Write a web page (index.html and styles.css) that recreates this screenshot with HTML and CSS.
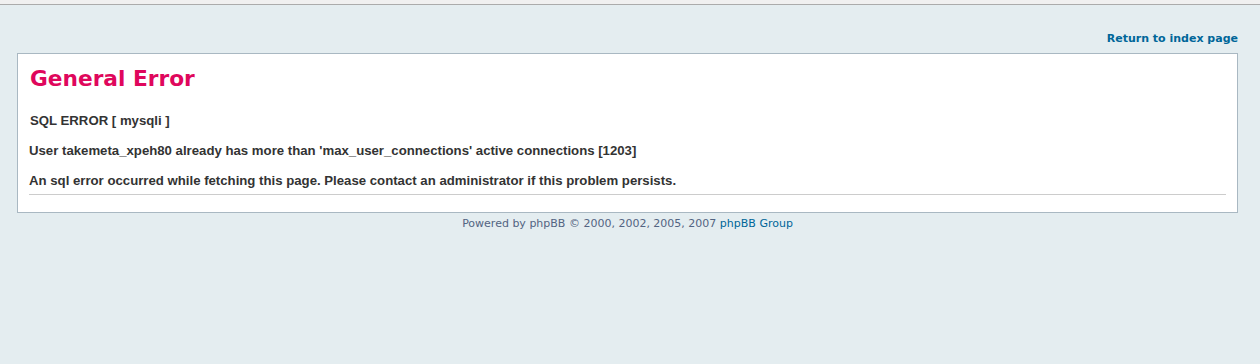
FILE: index.html
```
<!DOCTYPE html>
<html lang="en">
<head>
    <meta charset="UTF-8">
    <title>General Error</title>
    <link rel="stylesheet" href="styles.css">
</head>
<body id="errorpage">
<div class="topbar"></div>
<div id="wrap">
    <div id="page-header">
        <a href="#">Return to index page</a>
    </div>
    <div id="acp">
        <div class="panel">
            <div id="content">
                <h1>General Error</h1>
                <div class="message">
                    SQL ERROR [ mysqli ]<br><br>
                    User takemeta_xpeh80 already has more than 'max_user_connections' active connections [1203]<br><br>
                    An sql error occurred while fetching this page. Please contact an administrator if this problem persists.
                </div>
            </div>
        </div>
    </div>
    <div id="page-footer">
        Powered by phpBB &copy; 2000, 2002, 2005, 2007 <a href="#">phpBB Group</a>
    </div>
</div>
</body>
</html>
```

FILE: styles.css
```
* { margin: 0; padding: 0; }
body {
    font-family: "DejaVu Sans", Verdana, sans-serif;
    color: #536482;
    background: #E4EDF0;
    font-size: 11px;
    margin: 0;
}
a:link, a:active, a:visited { color: #006699; text-decoration: none; }
a:hover { color: #DD6900; text-decoration: underline; }
.topbar {
    height: 4px;
    background: #f0f0f0;
    border-bottom: 1px solid #ababab;
}
#wrap { padding: 0 22px 15px 17px; }
#page-header {
    height: 44px;
    display: flex;
    justify-content: flex-end;
    align-items: flex-end;
    padding-bottom: 3px;
    box-sizing: border-box;
}
#page-header a {
    font-weight: bold;
    font-size: 11px;
    line-height: 14px;
}
.panel {
    margin: 4px 0;
    background-color: #FFFFFF;
    border: solid 1px #A9B8C2;
}
#content { padding: 12px 11px 10px 11px; }
#content h1 {
    font-size: 21.7px;
    line-height: 26px;
    color: #DF075C;
    padding-left: 1px;
}
#content .message {
    margin-top: 21px;
    margin-bottom: 7px;
    border-bottom: 1px solid #CCCCCC;
    padding-bottom: 6px;
    color: #333333;
    font: bold 13.2px/15px "Liberation Sans", Arial, sans-serif;
    text-indent: 1px;
}
#page-footer {
    text-align: center;
    font-size: 11px;
    line-height: 14px;
}
```
